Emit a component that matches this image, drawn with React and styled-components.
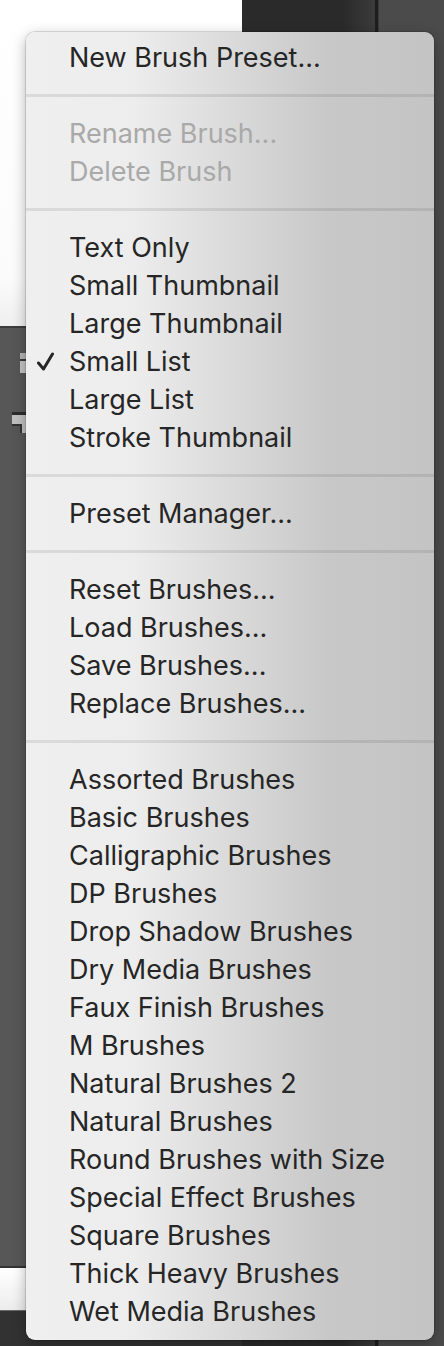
import React from "react";
import styled, { createGlobalStyle } from "styled-components";

const GlobalStyle = createGlobalStyle`
  html, body {
    margin: 0;
    padding: 0;
    background: #4b4b4b;
  }
  * {
    box-sizing: border-box;
  }
`;

const Page = styled.div`
  position: relative;
  display: flex;
  width: 444px;
  height: 1346px;
  overflow: hidden;
  font-family: Inter, "Liberation Sans", sans-serif;
`;

const LeftColumn = styled.div`
  display: flex;
  flex-direction: column;
  width: 242px;
`;

const WhitePanel = styled.div`
  height: 328px;
  background: linear-gradient(to bottom, #ffffff 0%, #fbfbfb 85%, #efefef 100%);
  border-bottom: 2px solid #3c3c3c;
`;

const GrayPanel = styled.div`
  flex: 1;
  background: #575757;
  display: flex;
  flex-direction: column;
  align-items: flex-end;
  padding-top: 25px;
  gap: 39px;
`;

const TinyGrip = styled.div`
  width: 6px;
  height: 20px;
  margin-right: 216px;
  background: linear-gradient(to bottom, #b5b5b5 0 30%, #3a3a3a 30% 40%, #c4c4c4 40% 100%);
`;

const TinyDoc = styled.div`
  position: relative;
  width: 14px;
  height: 21px;
  margin-right: 216px;
  background: #c0c0c0;
  border-top: 3px solid #2c2c2c;
  &::after {
    content: "";
    position: absolute;
    left: 0;
    bottom: 0;
    width: 8px;
    height: 7px;
    border-top: 2px solid #333;
    border-right: 2px solid #333;
    background: #575757;
  }
`;

const WhiteStrip = styled.div`
  height: 44px;
  border-top: 2px solid #333;
  background: linear-gradient(to bottom, #ffffff, #ececec);
`;

const DarkFoot = styled.div`
  height: 36px;
  background: #323232;
  border-top: 1px solid #6a6a6a;
`;

const RightColumn = styled.div`
  flex: 1;
  display: flex;
`;

const DarkPane = styled.div`
  width: 100px;
  background: #2a2a2a;
`;

const Fade = styled.div`
  width: 33px;
  background: linear-gradient(to right, #2a2a2a, #3b3b3b);
`;

const Divider = styled.div`
  width: 4px;
  background: #1e1e1e;
  border-right: 1px solid #3a3a3a;
`;

const MidPane = styled.div`
  flex: 1;
  background: #4b4b4b;
`;

const Menu = styled.div`
  position: absolute;
  left: 26px;
  top: 32px;
  width: 408px;
  height: 1308px;
  padding: 6px 0 10px;
  border-radius: 9px;
  background: linear-gradient(
    to right,
    #efefef 0%,
    #ededed 26%,
    #c8c8c8 74%,
    #c4c4c4 100%
  );
  box-shadow: 0 0 0 1px rgba(0, 0, 0, 0.12), 0 4px 14px rgba(0, 0, 0, 0.3);
`;

const Item = styled.div`
  position: relative;
  height: 38px;
  display: flex;
  align-items: center;
  padding-left: 43px;
  font-size: 27px;
  color: ${(p) => (p.disabled ? "#a9a9a9" : "#262626")};
  white-space: nowrap;
`;

const Check = styled.svg`
  position: absolute;
  left: 11px;
  top: 10px;
  width: 17px;
  height: 19px;
`;

const Separator = styled.div`
  height: 38px;
  display: flex;
  align-items: center;
  &::before {
    content: "";
    flex: 1;
    height: 3px;
    background: linear-gradient(to right, #dadada 0%, #d8d8d8 26%, #b6b6b6 74%, #b3b3b3 100%);
  }
`;

const groups = [
  [{ label: "New Brush Preset..." }],
  [
    { label: "Rename Brush...", disabled: true },
    { label: "Delete Brush", disabled: true },
  ],
  [
    { label: "Text Only" },
    { label: "Small Thumbnail" },
    { label: "Large Thumbnail" },
    { label: "Small List", checked: true },
    { label: "Large List" },
    { label: "Stroke Thumbnail" },
  ],
  [{ label: "Preset Manager..." }],
  [
    { label: "Reset Brushes..." },
    { label: "Load Brushes..." },
    { label: "Save Brushes..." },
    { label: "Replace Brushes..." },
  ],
  [
    { label: "Assorted Brushes" },
    { label: "Basic Brushes" },
    { label: "Calligraphic Brushes" },
    { label: "DP Brushes" },
    { label: "Drop Shadow Brushes" },
    { label: "Dry Media Brushes" },
    { label: "Faux Finish Brushes" },
    { label: "M Brushes" },
    { label: "Natural Brushes 2" },
    { label: "Natural Brushes" },
    { label: "Round Brushes with Size" },
    { label: "Special Effect Brushes" },
    { label: "Square Brushes" },
    { label: "Thick Heavy Brushes" },
    { label: "Wet Media Brushes" },
  ],
];

export default function App() {
  return (
    <>
      <GlobalStyle />
      <Page>
        <LeftColumn>
          <WhitePanel />
          <GrayPanel>
            <TinyGrip />
            <TinyDoc />
          </GrayPanel>
          <WhiteStrip />
          <DarkFoot />
        </LeftColumn>
        <RightColumn>
          <DarkPane />
          <Fade />
          <Divider />
          <MidPane />
        </RightColumn>

        <Menu>
          {groups.map((group, gi) => (
            <React.Fragment key={gi}>
              {gi > 0 && <Separator />}
              {group.map((item) => (
                <Item key={item.label} disabled={item.disabled}>
                  {item.checked && (
                    <Check viewBox="0 0 17 19">
                      <path
                        d="M1.5 11 L6.5 17 L15.5 2"
                        fill="none"
                        stroke="#262626"
                        strokeWidth="3"
                        strokeLinecap="round"
                        strokeLinejoin="round"
                      />
                    </Check>
                  )}
                  {item.label}
                </Item>
              ))}
            </React.Fragment>
          ))}
        </Menu>
      </Page>
    </>
  );
}
